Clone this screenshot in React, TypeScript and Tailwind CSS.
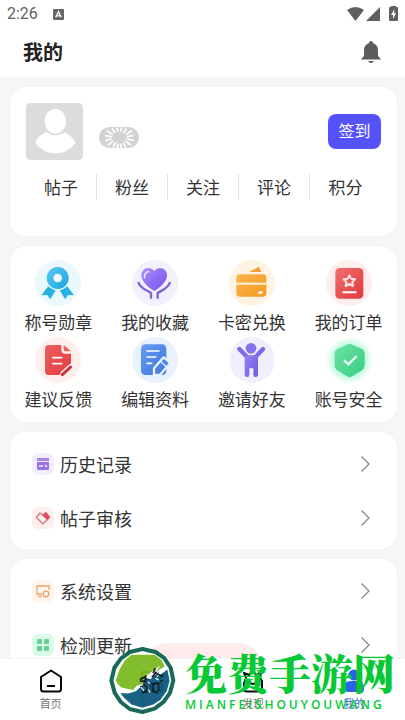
import React from "react";

const stats = ["帖子", "粉丝", "关注", "评论", "积分"];

function Gradient({ id, from, to }: { id: string; from: string; to: string }) {
    return (
        <linearGradient id={id} x1="0" y1="0" x2="1" y2="1">
            <stop offset="0" stopColor={from} />
            <stop offset="1" stopColor={to} />
        </linearGradient>
    );
}

const shortcuts = [
    {
        label: "称号勋章",
        art: (
            <>
                <Gradient id="medal" from="#5cc9f2" to="#1ba6e0" />
                <circle cx="69" cy="69" r="69" fill="#e9f9fe" />
                <path d="M40 78 19 106 37 105 46 118 62 90ZM96 78 117 106 99 105 90 118 74 90Z" fill="#25b1e2" />
                <circle cx="68" cy="54" r="37" fill="#e9f9fe" />
                <circle cx="68" cy="54" r="33" fill="url(#medal)" />
                <circle cx="68" cy="54" r="13" fill="#f1fbff" />
            </>
        ),
    },
    {
        label: "我的收藏",
        art: (
            <>
                <Gradient id="heart" from="#a690fb" to="#7750e9" />
                <circle cx="69" cy="69" r="69" fill="#f3f0fe" />
                <path d="M67 93C54 86 28 66 28 46 28 24 54 16 67 33 80 16 105 24 105 46 105 66 80 86 67 93Z" fill="url(#heart)" />
                <path d="M38 53c-2-10 4-18 12-18" fill="none" stroke="#e9e2ff" strokeWidth="5" strokeLinecap="round" />
                <path d="M19 66C24 86 44 90 57 99v17M114 66C109 86 90 90 77 99v17" fill="none" stroke="#8063d8" strokeWidth="7" />
            </>
        ),
    },
    {
        label: "卡密兑换",
        art: (
            <>
                <Gradient id="card" from="#f9b552" to="#f69a1c" />
                <circle cx="69" cy="69" r="69" fill="#fff4e4" />
                <path d="M60 36 90 20 97 36Z" fill="#f3a137" />
                <rect x="22" y="43" width="90" height="67" rx="10" fill="url(#card)" />
                <path d="M22 71h90" stroke="#fff4e4" strokeWidth="6" />
                <path d="M86 101 90 94h12l-3 7Z" fill="#fff" />
            </>
        ),
    },
    {
        label: "我的订单",
        art: (
            <>
                <Gradient id="order" from="#f0716e" to="#e0393e" />
                <circle cx="69" cy="69" r="69" fill="#feeeec" />
                <rect x="28" y="24" width="84" height="92" rx="13" fill="url(#order)" />
                <path d="M70 46 75 56 87 58 79 66 81 78 70 72 59 78 61 66 53 58 65 56Z" fill="none" stroke="#ffe5e3" strokeWidth="6" strokeLinejoin="round" />
                <path d="M52 97h37" stroke="#fff" strokeWidth="6" strokeLinecap="round" />
            </>
        ),
    },
    {
        label: "建议反馈",
        art: (
            <>
                <Gradient id="advice" from="#e9605e" to="#e43b40" />
                <circle cx="69" cy="69" r="69" fill="#feeeec" />
                <path d="M42 24H79V38Q79 50 91 50H108V78L72 114H42Q30 114 30 102V36Q30 24 42 24Z" fill="url(#advice)" />
                <path d="M86 24 108 43H92Q86 43 86 37Z" fill="#e9605e" />
                <path d="M54 62h26M54 80h26" stroke="#fff" strokeWidth="5" strokeLinecap="round" />
                <path d="M82 113 107 90" stroke="#feeeec" strokeWidth="18" />
                <path d="M82 113 107 90" stroke="#c5343c" strokeWidth="9" strokeLinecap="round" />
            </>
        ),
    },
    {
        label: "编辑资料",
        art: (
            <>
                <Gradient id="edit" from="#679cf0" to="#3e75df" />
                <circle cx="69" cy="69" r="69" fill="#e9f1fe" />
                <rect x="27" y="22" width="76" height="92" rx="13" fill="url(#edit)" />
                <path d="M45 42h36M45 60h26M45 79h14" stroke="#fff" strokeWidth="5" strokeLinecap="round" />
                <path d="M66 114V94L95 61 115 78 84 114Z" fill="#4d83df" stroke="#e9f1fe" strokeWidth="7" strokeLinejoin="round" />
                <path d="M84 72 103 89" stroke="#e9f1fe" strokeWidth="4" />
            </>
        ),
    },
    {
        label: "邀请好友",
        art: (
            <>
                <Gradient id="invite" from="#9583f1" to="#7057e3" />
                <circle cx="69" cy="69" r="69" fill="#f1effe" />
                <path d="M31 36 55 61H79L102 36" fill="none" stroke="#8069e9" strokeWidth="13" strokeLinecap="round" strokeLinejoin="round" />
                <path d="M47 57H87V113Q87 120 80 120T73 113V94H61V113Q61 120 54 120T47 113Z" fill="url(#invite)" />
                <circle cx="66" cy="34" r="20" fill="#f1effe" />
                <circle cx="66" cy="34" r="16" fill="#8672ec" />
            </>
        ),
    },
    {
        label: "账号安全",
        art: (
            <>
                <Gradient id="safe" from="#6be3a5" to="#38cd81" />
                <radialGradient id="glow">
                    <stop offset="0.6" stopColor="#b6fad7" />
                    <stop offset="1" stopColor="#b6fad7" stopOpacity="0.1" />
                </radialGradient>
                <circle cx="70" cy="70" r="69" fill="url(#glow)" />
                <path d="M63 23Q71 18 79 23L108 36Q116 40 116 48V85Q116 94 109 99L79 118Q71 123 63 118L33 99Q26 94 26 85V48Q26 40 34 36Z" fill="url(#safe)" />
                <path d="M54 70 67 82 92 57" fill="none" stroke="#e9fff4" strokeWidth="7" />
            </>
        ),
    },
];

const activityRows = [
    {
        label: "历史记录",
        chip: "bg-[#f3edfe]",
        art: (
            <>
                <path d="M5 5H17V8H5Z" fill="#a783ea" />
                <path d="M5 9H17V16Q17 17 16 17H6Q5 17 5 16Z" fill="#9b72e6" />
                <path d="M7 13h4M13 12l2 2" stroke="#f3edfe" strokeWidth="1.5" />
            </>
        ),
    },
    {
        label: "帖子审核",
        chip: "bg-[#feeeee]",
        art: (
            <>
                <path d="M8 6 4.500 10.500 11 17 17.500 10.500 14 6 11 8Z" fill="none" stroke="#d9828a" strokeWidth="1.5" strokeLinejoin="round" />
                <path d="M10 8 14 5 18 10 15 13Z" fill="#de4e5b" />
            </>
        ),
    },
];

const systemRows = [
    {
        label: "系统设置",
        chip: "bg-[#fff5ea]",
        art: (
            <g fill="none" stroke="#e9a66d" strokeWidth="1.300">
                <path d="M10 14H5V6H17V10M6 16.500H10" />
                <circle cx="14" cy="14" r="2.800" />
            </g>
        ),
    },
    {
        label: "检测更新",
        chip: "bg-[#d9fbe8]",
        art: (
            <g fill="#69cd95">
                <rect x="5" y="5" width="5" height="5" rx="1" />
                <rect x="12" y="5" width="5" height="5" rx="1" />
                <rect x="5" y="12" width="5" height="5" rx="1" />
                <rect x="12" y="12" width="5" height="5" rx="1" />
            </g>
        ),
    },
];

function StatusBar() {
    return (
        <div className="flex h-7 items-center justify-between px-[7px] text-[#5f5f5f]">
            <div className="flex items-center gap-[15px]">
                <span className="font-[Roboto,sans-serif] text-base">2:26</span>
                <svg className="h-[11px] w-[11px]" viewBox="0 0 12 12">
                    <rect width="12" height="12" rx="1" fill="#666" />
                    <path d="M3 9 6 3 9 9M4.500 7.500H7.500" fill="none" stroke="#fff" strokeWidth="1.500" />
                </svg>
            </div>
            <svg className="h-4 w-[51px]" viewBox="0 0 51 16" fill="#606060">
                <path d="M0 4Q8.500-2 17 4L8.500 15Z" />
                <path d="M33 1V15H19Z" />
                <path d="M44 1V0H49V1H50Q51 1 51 2V14Q51 15 50 15H43Q42 15 42 14V2Q42 1 43 1Z" />
                <path d="M47.500 3 44 9H46V13L49 7H47Z" fill="#fff" />
            </svg>
        </div>
    );
}

function MenuCard({ rows }: { rows: typeof activityRows }) {
    return (
        <section className="shrink-0 rounded-2xl bg-white pb-1 pt-[5px] shadow-[0_0_3px_rgba(0,0,0,0.03)]">
            {rows.map((row) => (
                <button key={row.label} className="flex h-[54px] w-full items-center pl-[22px] pr-[27px] text-left">
                    <span className={`mr-1.5 h-[22px] w-[22px] rounded-md ${row.chip}`}>
                        <svg className="h-[22px] w-[22px]" viewBox="0 0 22 22">{row.art}</svg>
                    </span>
                    <span className="flex-1 text-lg text-[#333]">{row.label}</span>
                    <svg className="h-4 w-[9px]" viewBox="0 0 9 16" fill="none" stroke="#858585" strokeWidth="1.200">
                        <path d="M.5.5 8 8 .5 15.500" />
                    </svg>
                </button>
            ))}
        </section>
    );
}

function Watermark() {
    return (
        <div className="pointer-events-none absolute bottom-1.5 left-[109px] flex items-center gap-[9px]">
            <svg className="h-[67px] w-[67px] opacity-95" viewBox="0 0 200 200">
                <path
                    d="M100 6 139 15 165 33 184 62 192 100 182 137 163 164 136 184 100 194 62 185 36 165 17 137 7 100 16 62 36 34 62 15Z"
                    fill="#fff" stroke="#0d6152" strokeWidth="12" strokeLinejoin="round"
                />
                <path d="M67 23H136L157 39 166 58 141 73 153 55 115 83 103 109 84 115 71 128 37 121 28 113 20 100 31 68 47 40Z" fill="#7cba22" />
                <path d="M174 67 181 101 172 132 153 158 132 172 99 181 67 172 44 151 34 137 57 139 80 132 100 114 108 92 124 96 150 73 142 92Z" fill="#0d5a80" />
                {/* circles tab glyph showing through the mark */}
                <path d="M92 97 109 88V102H92M128 91 142 74M138 63 132 78M142 80 162 88" fill="none" stroke="#111" strokeWidth="5" />
                <path d="M103 112 112 118V134L98 137M95 116 101 126M130 108V132L146 138M126 109H148V132M153 102 161 99" fill="none" stroke="#111" strokeWidth="5" />
                <path d="M96 120 104 130M116 105 122 109M139 93 148 99M118 127 122 136" stroke="#fff" strokeWidth="4" />
            </svg>
            <div className="flex flex-col text-[#06c935]">
                <span className="font-['Noto_Serif_CJK_SC','Noto_Sans_CJK_SC',serif] text-[42px] font-black leading-[46px]">免费手游网</span>
                <span className="mt-0.5 font-['Open_Sans',sans-serif] text-xs font-semibold leading-4 tracking-[3px]">MIANFEISHOUYOUWANG</span>
            </div>
        </div>
    );
}

export default function App() {
    return (
        <div className="relative flex h-screen flex-col overflow-hidden bg-[#f6f6f6] font-['Noto_Sans_CJK_SC',sans-serif]">
            <header className="h-[77px] shrink-0 bg-white">
                <StatusBar />
                <div className="flex h-12 items-center justify-between pl-[23px] pr-6">
                    <h1 className="text-xl font-bold text-[#222]">我的</h1>
                    <button aria-label="通知">
                        <svg className="h-[22px] w-5" viewBox="0 0 20 22" fill="#5c5c5c">
                            <path d="M8 2Q8 0 10 0T12 2Q17 4 17 9V15L19.500 17.500V18.500H.5V17.500L3 15V9Q3 4 8 2ZM7 20H13Q12 22 10 22T7 20Z" />
                        </svg>
                    </button>
                </div>
            </header>

            <main className="flex min-h-0 flex-1 flex-col gap-2.5 overflow-hidden pl-2.5 pr-2 pt-2.5">
                {/* Profile */}
                <section className="h-[149px] shrink-0 rounded-2xl bg-white px-4 pt-4 shadow-[0_0_3px_rgba(0,0,0,0.03)]">
                    <div className="flex items-center">
                        <svg className="h-[57px] w-[57px]" viewBox="0 0 171 171">
                            <rect width="171" height="171" rx="13" fill="#dcdcdc" />
                            <path d="M27 119Q39 95 60 88Q88 106 116 88Q138 98 149 119Q125 151 88 151T27 119Z" fill="#fff" />
                            <ellipse cx="88" cy="55" rx="35" ry="40" fill="#dcdcdc" />
                            <ellipse cx="88" cy="55" rx="32" ry="37" fill="#fff" />
                        </svg>
                        <svg className="ml-4 mt-3 h-[21px] w-10" viewBox="0 0 120 63">
                            <rect width="120" height="63" rx="31" fill="#d3d3d3" />
                            <path
                                d="M54 3 56 12M68 3 65 12M40 6 47 16M82 6 75 16M25 12 40 22M97 12 82 22M20 26 37 29M102 26 85 29M20 40 37 36M102 40 85 36M28 53 41 43M94 53 81 43M43 59 49 48M79 59 73 48M55 61 57 52M67 61 65 52"
                                stroke="#fff" strokeWidth="5" strokeLinecap="round"
                            />
                        </svg>
                        <button className="ml-auto h-[35px] w-[53px] rounded-lg bg-[#5652fb] pb-1 text-base leading-5 text-white">签到</button>
                    </div>
                    <div className="mt-3.5 grid grid-cols-5 divide-x divide-[#e2e2e2]">
                        {stats.map((item) => (
                            <button key={item} className="h-[26px] text-[17px] leading-[26px] text-[#333]">{item}</button>
                        ))}
                    </div>
                </section>

                {/* Shortcuts */}
                <section className="grid shrink-0 grid-cols-4 rounded-2xl bg-white pb-2 pt-3.5 shadow-[0_0_3px_rgba(0,0,0,0.03)]">
                    {shortcuts.map((item) => (
                        <button key={item.label} className="flex flex-col items-center">
                            <svg className="h-[46px] w-[46px]" viewBox="0 0 138 138">{item.art}</svg>
                            <span className="text-[17px] leading-[31px] text-[#333]">{item.label}</span>
                        </button>
                    ))}
                </section>

                <MenuCard rows={activityRows} />
                <MenuCard rows={systemRows} />
            </main>

            <div className="absolute bottom-7 left-36 h-[49px] w-[118px] rounded-3xl bg-[#feecec]" />

            <nav className="relative grid h-[62px] shrink-0 grid-cols-4 border-t border-[#f5f5f5] bg-white text-[11px] text-[#777]">
                <a href="#home" className="flex flex-col items-center pt-2.5">
                    <svg className="h-6 w-6" viewBox="0 0 24 24" fill="none" stroke="#080808" strokeWidth="2" strokeLinejoin="round">
                        <path d="M12 1.500 22 8V20Q22 22.500 19.500 22.500H4.500Q2 22.500 2 20V8Z" />
                        <path d="M8 17H16" />
                    </svg>
                    <span className="leading-5">首页</span>
                </a>
                <a href="#circle" className="flex flex-col items-center pt-2.5">
                    <svg className="h-6 w-6" viewBox="0 0 24 24" fill="none" stroke="#080808" strokeWidth="2">
                        <path d="M2 3H10V10H2ZM2 14H10V22H2ZM14 14H22V22H14ZM18 1 23 6 18 11 13 6Z" />
                    </svg>
                    <span className="leading-5">圈子</span>
                </a>
                <a href="#discover" className="flex flex-col items-center pt-2.5">
                    <svg className="h-6 w-6" viewBox="0 0 24 24" fill="none" stroke="#080808" strokeWidth="2" strokeLinejoin="round">
                        <path d="M5 9 3 4 8 6 12 2 15 6 20 3 19 9 21 12V20Q21 22.500 18 22.500H6Q3 22.500 3 20V14ZM8 13Q12 17 16 13" />
                    </svg>
                    <span className="leading-5">发现</span>
                </a>
                <a href="#mine" className="flex flex-col items-center pt-2.5 text-[#3d63df]">
                    <svg className="h-6 w-6" viewBox="0 0 24 24" fill="#2c63ed">
                        <circle cx="12" cy="6" r="5.500" />
                        <path d="M2 19Q2 12 9 12H15Q22 12 22 19T17 23H7Q2 23 2 19Z" />
                    </svg>
                    <span className="leading-5">我的</span>
                </a>
            </nav>

            <Watermark />
        </div>
    );
}
